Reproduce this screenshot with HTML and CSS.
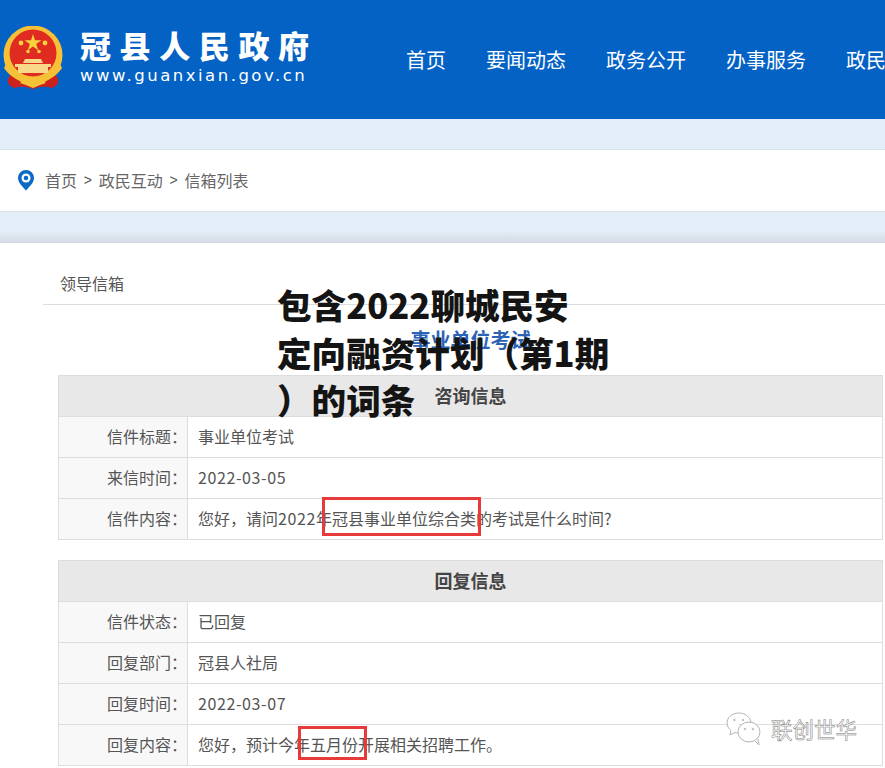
FILE: index.html
```html
<!DOCTYPE html>
<html lang="zh">
<head>
<meta charset="utf-8">
<title>信箱列表</title>
<link rel="stylesheet" href="styles.css">
</head>
<body>
<div class="page">
  <header class="header">
    <div class="brand">
      <svg class="emblem" width="60" height="64" viewBox="0 0 60 64">
        <path d="M8 48 Q0 57 11 62 Q20 59 30 63 Q40 59 49 62 Q60 57 52 48Z" fill="#c9221f"/>
        <path d="M17 57 Q24 51 30 57 Q36 51 43 57 Q36 59 30 62 Q24 59 17 57Z" fill="#f5c53a"/>
        <circle cx="30" cy="29" r="29.500" fill="#f6c137"/>
        <circle cx="30" cy="27" r="23.500" fill="#e02b20"/>
        <path d="M30 8l2 6.200h6.500l-5.300 3.800 2 6.200-5.200-3.800-5.200 3.800 2-6.200-5.300-3.800H28z" fill="#f8d13e"/>
        <circle cx="18" cy="17" r="2.400" fill="#f8d13e"/><circle cx="42" cy="17" r="2.400" fill="#f8d13e"/>
        <circle cx="25" cy="25.500" r="1.800" fill="#f8d13e"/><circle cx="36" cy="25.500" r="1.800" fill="#f8d13e"/>
        <path d="M22 33h16l2 4H20zM12 38h36v3H12zM15 41h30v6H15z" fill="#f8d98a"/>
        <path d="M3 38 Q10 51 30 51 Q50 51 57 38 L59 42 Q50 56 30 56 Q10 56 1 42Z" fill="#f6c137"/>
      </svg>
      <div class="brand-text">
        <div class="brand-name">冠县人民政府</div>
        <div class="brand-url">www.guanxian.gov.cn</div>
      </div>
    </div>
    <nav class="nav">
      <span>首页</span><span>要闻动态</span><span>政务公开</span><span>办事服务</span><span>政民互动</span>
    </nav>
  </header>

  <div class="band"></div>

  <div class="crumbs">
    <svg class="pin" width="18" height="22" viewBox="0 0 18 22">
      <path d="M9 1a8 8 0 0 0-8 8c0 5 5 9 8 12.500 3-3.500 8-7.500 8-12.500a8 8 0 0 0-8-8z" fill="#0a6ac4"/>
      <circle cx="9" cy="9" r="4.500" fill="#fff"/>
      <circle cx="9" cy="9" r="2.300" fill="#0a6ac4"/>
    </svg>
    <span>首页</span><i>&gt;</i><span>政民互动</span><i>&gt;</i><span>信箱列表</span>
  </div>

  <div class="band band-shadow"></div>

  <main class="content">
    <div class="section-title"><span>领导信箱</span></div>
    <h2 class="letter-title">事业单位考试</h2>

    <table class="info">
      <colgroup><col class="col-label"><col></colgroup>
      <tr><th colspan="2">咨询信息</th></tr>
      <tr><td class="label">信件标题：</td><td>事业单位考试</td></tr>
      <tr><td class="label">来信时间：</td><td><span class="num">2022-03-05</span></td></tr>
      <tr><td class="label">信件内容：</td><td>您好，请问<span class="num">2022</span>年冠县事业单位综合类的考试是什么时间?</td></tr>
    </table>

    <table class="info">
      <colgroup><col class="col-label"><col></colgroup>
      <tr><th colspan="2">回复信息</th></tr>
      <tr><td class="label">信件状态：</td><td>已回复</td></tr>
      <tr><td class="label">回复部门：</td><td>冠县人社局</td></tr>
      <tr><td class="label">回复时间：</td><td><span class="num">2022-03-07</span></td></tr>
      <tr><td class="label">回复内容：</td><td>您好，预计今年五月份开展相关招聘工作。</td></tr>
    </table>
  </main>

  <h1 class="overlay-title">包含2022聊城民安<br>定向融资计划（第1期<br>）的词条</h1>
  <div class="mark mark-a"></div>
  <div class="mark mark-b"></div>

  <div class="watermark">
    <svg width="38" height="36" viewBox="0 0 38 36" fill="#fff" stroke="#b5b5b5" stroke-width="1">
      <path d="M14 2C7 2 2 6.500 2 12c0 3 1.500 5.500 4 7.500L5 24l5-2.500c1 .3 2 .4 3 .5"/>
      <path d="M14 2c6 0 11 4 12 9"/>
      <ellipse cx="24" cy="21" rx="11" ry="10"/>
      <path d="M30 30l4 4-1-6" />
      <circle cx="9.500" cy="9" r=".8"/><circle cx="18" cy="9" r=".8"/>
      <circle cx="20" cy="18" r=".8"/><circle cx="28" cy="18" r=".8"/>
    </svg>
    <span>联创世华</span>
  </div>
</div>
</body>
</html>
```
FILE: styles.css
```css
* { box-sizing: border-box; }
html, body { margin: 0; padding: 0; height: 100%; overflow: hidden; background: #fff; }
.page {
  position: relative;
  width: 885px;
  height: 768px;
  overflow: hidden;
  font-family: "Noto Sans CJK SC", "Noto Sans", sans-serif;
  color: #555;
}
.header {
  height: 119px;
  background: #0462c5;
  display: flex;
  align-items: flex-start;
  overflow: hidden;
  white-space: nowrap;
}
.brand { display: flex; width: 406px; flex: none; padding: 26px 0 0 3px; }
.emblem { flex: none; }
.brand-text { margin-left: 17px; color: #fff; }
.brand-name {
  font-size: 31px;
  font-weight: 900;
  line-height: 36px;
  letter-spacing: 8.600px;
  margin-top: 1px;
}
.brand-url {
  font-family: "DejaVu Sans", sans-serif;
  font-size: 16.500px;
  line-height: 20px;
  letter-spacing: 2.500px;
  margin-top: 3px;
}
.nav {
  display: flex;
  gap: 40px;
  padding-top: 45px;
  font-size: 20px;
  line-height: 30px;
  color: #fff;
  flex: none;
}
.band { height: 31px; background: #e3eef9; border-bottom: 1px solid #d8e1ea; }
.band-shadow {
  height: 31px;
  border-bottom: 0;
  background: linear-gradient(#e3edf8 0, #e3edf8 60%, #d3dae3 100%);
}
.crumbs {
  height: 62px;
  display: flex;
  align-items: center;
  padding: 0 0 2px 17px;
  border-bottom: 1px solid #dde3e9;
  font-size: 16px;
  color: #666;
}
.pin { margin-right: 10px; }
.crumbs i { font-style: normal; margin: 0 6.800px; font-size: 14px; color: #555; font-family: "Liberation Sans", sans-serif; }
.content { padding: 0 2px 0 58px; }
.section-title {
  margin: 0 -2px 0 -15px;
  height: 62px;
  padding: 27px 0 0 17px;
  border-bottom: 1px solid #ddd;
  font-size: 16px;
  line-height: 26px;
  color: #555;
}
.letter-title {
  margin: 0;
  height: 70px;
  padding-top: 22px;
  text-align: center;
  font-size: 20px;
  line-height: 26px;
  font-weight: 700;
  color: #2c62b4;
}
.info {
  width: 825px;
  border-collapse: collapse;
  margin-bottom: 20px;
  font-size: 16px;
  table-layout: fixed;
}
.num { letter-spacing: 0.600px; }
.col-label { width: 129px; }
.info th {
  height: 41px;
  padding: 0 0 2px;
  background: #e8e8e8;
  border: 1px solid #ddd;
  font-size: 18px;
  font-weight: 700;
  color: #444;
  text-align: center;
}
.info td {
  height: 41px;
  padding: 0 10px 2px;
  border: 1px solid #ddd;
  color: #555;
}
.info td.label {
  padding: 0 0 2px;
  text-align: right;
  background: #f8f8f8;
}
.overlay-title {
  position: absolute;
  left: 277px;
  top: 281px;
  margin: 0;
  font-size: 34.600px;
  line-height: 47.500px;
  font-weight: 900;
  color: #141414;
  white-space: nowrap;
}
.mark { position: absolute; border: 3px solid #e83a3a; }
.mark-a { left: 322px; top: 497px; width: 159px; height: 39px; }
.mark-b { left: 298px; top: 726px; width: 69px; height: 34px; }
.watermark {
  position: absolute;
  left: 725px;
  top: 711px;
  display: flex;
  align-items: center;
  gap: 8px;
  font-size: 21.500px;
  line-height: 36px;
  color: #fff;
  -webkit-text-stroke: 0.500px #777;
}
```
